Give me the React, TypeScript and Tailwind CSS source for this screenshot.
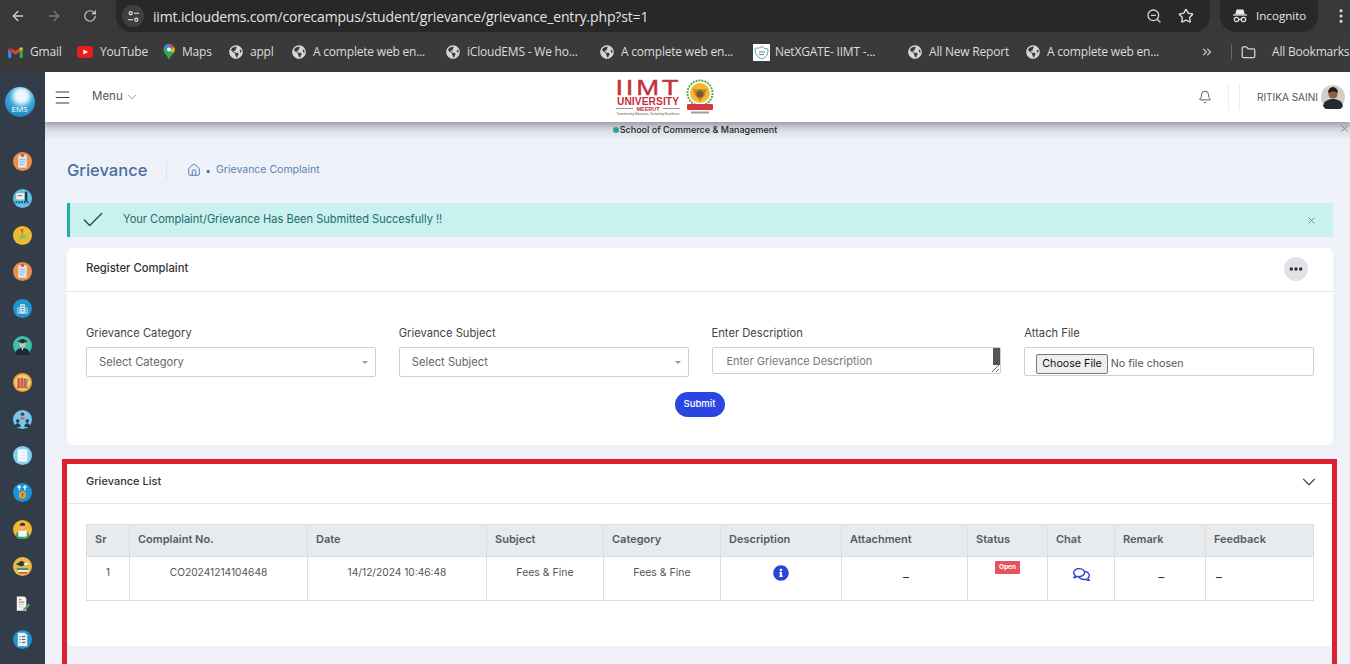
import type { ReactNode } from 'react'
import { ArrowLeft, ArrowRight, Bell, Check, ChevronDown, ChevronsRight, Ellipsis, EllipsisVertical, Folder, Home, Menu, RotateCw, Star, X, ZoomOut } from 'lucide-react'
import { FaGlobeAmericas, FaInfoCircle, FaRegComments } from 'react-icons/fa'

const poppins = 'font-["Inter","Open_Sans",sans-serif]'

function Gmail() {
  return (
    <svg viewBox="0 0 16 12" className="h-[11px] w-[15px]">
      <path d="M0 2v9a1 1 0 0 0 1 1h2.5V5z" fill="#4285f4" />
      <path d="M16 2v9a1 1 0 0 1-1 1h-2.5V5z" fill="#34a853" />
      <path d="M3.5 5 8 8.4 12.5 5V1L8 4.4 3.5 1z" fill="#ea4335" />
      <path d="M0 2c0-1.6 2-2.4 3.5-1v4L0 2.5z" fill="#c5221f" />
      <path d="M16 2c0-1.6-2-2.4-3.5-1v4L16 2.5z" fill="#fbbc04" />
    </svg>
  )
}

function YouTube() {
  return (
    <svg viewBox="0 0 16 12" className="h-[12px] w-[16px]">
      <rect width="16" height="12" rx="3" fill="#ea1d1d" />
      <path d="M6.3 3.4 11 6l-4.7 2.6z" fill="#fff" />
    </svg>
  )
}

function MapsPin() {
  return (
    <svg viewBox="0 0 12 16" className="h-[16px] w-[12px]">
      <path d="M6 0a5.6 5.6 0 0 1 5.6 5.6C11.6 9.6 7.6 11 6 16 4.4 11 .4 9.6.4 5.6A5.6 5.6 0 0 1 6 0z" fill="#34a853" />
      <path d="M1.6 2.2A5.6 5.6 0 0 1 6 0l1.5 3.8-3.4 3.4z" fill="#4285f4" />
      <path d="M6 0a5.6 5.6 0 0 1 5 3L7.5 3.8z" fill="#ea4335" />
      <path d="M11 3a5.6 5.6 0 0 1 .6 2.6c0 1.3-.4 2.3-1 3.3L7.5 7z" fill="#fbbc04" />
      <circle cx="6" cy="5.6" r="2" fill="#fff" />
    </svg>
  )
}

function NetIcon() {
  return (
    <svg viewBox="0 0 17 17" className="size-[17px]">
      <rect width="17" height="17" fill="#fff" />
      <path d="M2 5c2-2 3 0 4-1s4-2 5 0 3 0 4 1c0 5-1 8-6 10C4 13 2 10 2 5z" fill="none" stroke="#4ba3a8" strokeWidth="1" />
      <path d="M6 8h6M6 10.5h5" stroke="#6d7f86" strokeWidth="1" />
    </svg>
  )
}

function Bookmark({ icon, label, className }: { icon?: ReactNode; label: string; className?: string }) {
  return (
    <div className={`flex items-center gap-[7px] ${className ?? ''}`}>
      {icon ?? <FaGlobeAmericas className="size-[14px] text-[#d6d6d6]" />}
      <span className="whitespace-nowrap">{label}</span>
    </div>
  )
}

function Incognito() {
  return (
    <svg viewBox="0 0 16 16" className="size-[16px]" fill="none" stroke="#e8e8e8" strokeWidth="1.2">
      <path d="M5 2h6l1 4H4z" fill="#e8e8e8" />
      <path d="M1 7h14" />
      <circle cx="4.5" cy="11.5" r="2.2" />
      <circle cx="11.5" cy="11.5" r="2.2" />
      <path d="M6.7 11.5h2.6" />
    </svg>
  )
}

function BrowserBar() {
  return (
    <div className="shrink-0 bg-[#3a3a3a] font-['Open_Sans',sans-serif] text-[#e6e6e6]">
      <div className="flex h-[32px] items-center bg-[#383838]">
        <div className="flex w-[116px] items-center pl-[10px]">
          <ArrowLeft className="size-[16px] text-[#cfcfcf]" />
          <ArrowRight className="ml-[20px] size-[16px] text-[#777]" />
          <RotateCw className="ml-[21px] size-[14px] text-[#d0d0d0]" />
        </div>
        <div className="flex h-[32px] flex-1 items-center rounded-b-[16px] bg-[#282828] pl-[6px] pr-[16px]">
          <span className="flex size-[22px] items-center justify-center rounded-full bg-[#3f3f3f]">
            <svg viewBox="0 0 14 14" className="size-[13px]" fill="none" stroke="#e8e8e8" strokeWidth="1.2">
              <circle cx="4" cy="3.5" r="1.7" />
              <path d="M7.5 3.5H13M1 10.5h5.5" />
              <circle cx="10" cy="10.5" r="1.7" />
            </svg>
          </span>
          <span className="ml-[9px] text-[14px] tracking-[-0.16px] text-[#e4e4e4]">
            iimt.icloudems.com/corecampus/student/grievance/grievance_entry.php?st=1
          </span>
          <ZoomOut className="ml-auto size-[16px] text-[#d6d6d6]" />
          <Star className="ml-[16px] size-[16px] text-[#e0e0e0]" />
        </div>
        <div className="ml-[10px] flex h-[32px] w-[98px] items-center gap-[8px] rounded-b-[16px] bg-[#282828] pl-[12px] text-[11.6px]">
          <Incognito />
          Incognito
        </div>
        <EllipsisVertical className="ml-[14px] size-[18px] shrink-0 text-[#e0e0e0]" />
      </div>
      <div className="flex h-[40px] items-center overflow-hidden pl-[8px] text-[12px] tracking-[-0.2px] text-[#dcdcdc]">
        <Bookmark icon={<Gmail />} label="Gmail" className="w-[69px] shrink-0" />
        <Bookmark icon={<YouTube />} label="YouTube" className="w-[86px] shrink-0" />
        <Bookmark icon={<MapsPin />} label="Maps" className="w-[66px] shrink-0" />
        <Bookmark label="appl" className="w-[63px] shrink-0" />
        <Bookmark label="A complete web en..." className="w-[154px] shrink-0" />
        <Bookmark label="iCloudEMS - We ho..." className="w-[154px] shrink-0" />
        <Bookmark label="A complete web en..." className="w-[153px] shrink-0" />
        <Bookmark icon={<NetIcon />} label="NetXGATE- IIMT -..." className="w-[155px] shrink-0 !gap-[5px]" />
        <Bookmark label="All New Report" className="w-[118px] shrink-0" />
        <Bookmark label="A complete web en..." className="w-[174px] shrink-0" />
        <ChevronsRight className="size-[14px] shrink-0 text-[#cfcfcf]" />
        <span className="ml-[17px] h-[16px] w-px shrink-0 bg-[#666]" />
        <Folder className="ml-[9px] size-[15px] shrink-0 text-[#d6d6d6]" />
        <span className="ml-[16px] whitespace-nowrap">All Bookmarks</span>
      </div>
    </div>
  )
}

const pageIcon = (
  <>
    <circle cx="10" cy="10" r="10" fill="#ee8f45" />
    <rect x="5.5" y="3.5" width="9" height="13" rx="1" fill="#d5e6f2" />
    <rect x="8.5" y="2" width="3" height="3" fill="#d9503f" />
    <path d="M7 8h6M7 10.5h6M7 13h4" stroke="#8fb6d4" strokeWidth="1" />
  </>
)

const sideIcons: ReactNode[] = [
  pageIcon,
  <>
    <circle cx="10" cy="10" r="10" fill="#63bfe6" />
    <rect x="3.5" y="4.5" width="8.5" height="6.5" fill="#f1f4f6" />
    <path d="M5 7h5" stroke="#d9503f" strokeWidth="1.2" />
    <rect x="12.5" y="5" width="2.6" height="8" fill="#24384e" />
    <circle cx="13.8" cy="4" r="1.4" fill="#24384e" />
    <path d="M2.5 14h15" stroke="#24506f" strokeWidth="2" strokeDasharray="2 1" />
  </>,
  <>
    <circle cx="10" cy="10" r="10" fill="#f2b92f" />
    <path d="M4.5 9.5 15.5 7.5 16 13 5.5 15z" fill="#b9c456" />
    <path d="M8 3.5h3l-1 3 .2 3h-.6l-.4-3z" fill="#d9483a" />
    <path d="M7 12 13 11" stroke="#7c8f3a" strokeWidth=".8" />
  </>,
  pageIcon,
  <>
    <circle cx="10" cy="10" r="10" fill="#1e96d0" />
    <rect x="7.5" y="5.5" width="5" height="10" fill="#d6ebf7" />
    <rect x="4.5" y="9" width="3" height="6.5" fill="#a9d3ec" />
    <rect x="12.5" y="9" width="3" height="6.5" fill="#a9d3ec" />
    <path d="M8.8 7.5h2.4M8.8 10h2.4M8.8 12.5h2.4M5.2 11h1.6M13.2 11h1.6M5.2 13.5h1.6M13.2 13.5h1.6" stroke="#2873a8" strokeWidth="1" />
  </>,
  <>
    <circle cx="10" cy="10" r="10" fill="#3fc0ac" />
    <path d="M2.5 20c0-5.5 3-7.5 7.5-7.5s7.5 2 7.5 7.5z" fill="#1a2a33" />
    <circle cx="10" cy="9" r="3.2" fill="#e5bd98" />
    <path d="M4.5 5.5 10 3l5.5 2.5L10 8z" fill="#21343d" />
    <path d="M9 12.5h2l-1 3z" fill="#e8f2f2" />
  </>,
  <>
    <circle cx="10" cy="10" r="10" fill="#f0a838" />
    <circle cx="10" cy="10" r="8" fill="#f6cf7c" />
    <path d="M4.5 5.5h3V15h-3zM8 5h2.5v10H8zM11 5.5h2.5V15H11z" fill="#cf5a50" />
    <path d="M14 6l2 .6-1.5 8.4-1-.3z" fill="#5aa56b" />
    <path d="M4 15.5h12" stroke="#9a5f2a" strokeWidth="1" />
  </>,
  <>
    <circle cx="10" cy="10" r="10" fill="#74c6ea" />
    <circle cx="10" cy="4.5" r="1.8" fill="#5b3a2a" />
    <path d="M7.5 10c0-2 1-3 2.5-3s2.5 1 2.5 3z" fill="#e0675c" />
    <circle cx="5" cy="11.5" r="1.8" fill="#24384e" />
    <circle cx="15" cy="11.5" r="1.8" fill="#24384e" />
    <path d="M2 18c0-2.5 1-4 3-4s3 1.5 3 4zM12 18c0-2.5 1-4 3-4s3 1.5 3 4z" fill="#24384e" />
  </>,
  <>
    <circle cx="10" cy="10" r="10" fill="#82d0f1" />
    <rect x="5" y="3.5" width="10" height="13" rx="1" fill="#f3f8fb" />
    <path d="M7 7h.1M7 10h.1M7 13h.1" stroke="#d9503f" strokeWidth="1.2" />
    <path d="M9 7h4M9 10h4M9 13h4" stroke="#d6e2ea" strokeWidth="1" />
  </>,
  <>
    <circle cx="10" cy="10" r="10" fill="#1c93dc" />
    <path d="M6.5 8V3M4.8 4.8 6.5 3l1.7 1.8M12.5 8V3M10.8 4.8 12.5 3l1.7 1.8" stroke="#fff" strokeWidth="1.2" fill="none" />
    <circle cx="10" cy="12.5" r="3.8" fill="#e1a52a" />
    <path d="M10 10.5v4" stroke="#7c5510" strokeWidth="1.2" />
  </>,
  <>
    <circle cx="10" cy="10" r="10" fill="#f2b632" />
    <path d="M3 18c0-5 2.5-7 7-7s7 2 7 7a10 10 0 0 1-14 0z" fill="#3f9e5c" />
    <circle cx="10" cy="6.5" r="2.8" fill="#e7b78f" />
    <path d="M7.2 6c0-2 1.3-3 2.8-3s2.8 1 2.8 3z" fill="#4a2d1e" />
    <rect x="5.5" y="11" width="9" height="6.5" rx=".8" fill="#f6f6f6" />
  </>,
  <>
    <circle cx="10" cy="10" r="10" fill="#efb84a" />
    <path d="M3 7.5 9 4l6 3-6 3z" fill="#2d3b44" />
    <path d="M4 11.5h12v2.2H4z" fill="#3e9e6a" />
    <path d="M5 13.7h11v2H5z" fill="#f2f2f2" />
    <path d="M6 15.7h9v1.8H6z" fill="#d9583e" />
    <path d="M11 6h5v2.5h-4z" fill="#f2f2f2" />
  </>,
  <>
    <path d="M4 2.5h8l2 2v13H4z" fill="#f4f4f4" />
    <path d="M6 6h3M6 8.5h6" stroke="#d9503f" strokeWidth="1" />
    <path d="M6 11h6M6 13.5h5" stroke="#c6c6c6" strokeWidth="1" />
    <path d="M11 15.5 16.5 10l1.5 1.5-5.5 5.5-2 .4z" fill="#5aa56b" />
  </>,
  <>
    <circle cx="10" cy="10" r="10" fill="#1f92cf" />
    <path d="M5 3h7.5L15 5.5V17H5z" fill="#e6f1f8" />
    <path d="M7 7h1M9.5 7H13M7 10h1M9.5 10H13M7 13h1M9.5 13H13" stroke="#33566f" strokeWidth="1" />
  </>,
]

function Sidebar() {
  return (
    <aside className="flex w-[45px] shrink-0 flex-col items-center bg-[#333d4a]">
      <div className="mr-[6px] mt-[15px] flex size-[30px] items-end justify-center rounded-full bg-[radial-gradient(circle_at_55%_30%,#f2fafd_0%,#e6f4fb_22%,#3ea8dc_45%,#0f6fa8_100%)] pb-[3px] font-['Open_Sans',sans-serif] text-[8px] leading-[10px] text-white">
        EMS
      </div>
      <div className="mt-[35px] flex flex-col items-center gap-[17.8px]">
        {sideIcons.map((icon, i) => (
          <svg key={i} viewBox="0 0 20 20" className="size-[19px] shrink-0">
            {icon}
          </svg>
        ))}
      </div>
    </aside>
  )
}

function Logo() {
  return (
    <div className="flex items-center gap-[3px]">
      <div className="flex w-[64px] flex-col items-center font-['Liberation_Sans',sans-serif] text-[#c6303a]">
        <span className="inline-block scale-x-[1.25] text-[22px] leading-[18px] tracking-[2.2px] [-webkit-text-stroke:0.4px_#c6303a]">IIMT</span>
        <span className="text-[10.2px] font-bold leading-[9px] tracking-[0.1px]">UNIVERSITY</span>
        <div className="flex w-full items-center gap-[3px]">
          <span className="h-px flex-1 bg-[#999]" />
          <span className="text-[5.5px] font-bold leading-[6px]">MEERUT</span>
          <span className="h-px flex-1 bg-[#999]" />
        </div>
        <span className="whitespace-nowrap text-[3px] leading-[4px] text-[#555]">Transforming Education, Sustaining Excellence</span>
      </div>
      <svg viewBox="0 0 34 36" className="h-[36px] w-[34px]">
        <circle cx="17" cy="14" r="12.5" fill="none" stroke="#5aa84e" strokeWidth="2" strokeDasharray="2 1" />
        <circle cx="17" cy="14" r="10" fill="#f4b92c" />
        <path d="M10 9c2 2 4 1 7 1s5 1 7-1l-2 7-5 6-5-6z" fill="#b98a3c" />
        <circle cx="17" cy="15" r="3.5" fill="#7a5a2a" />
        <rect x="4" y="25" width="26" height="6" rx="1" fill="#d6363f" />
        <rect x="8" y="32.5" width="18" height="2" fill="#999" />
      </svg>
    </div>
  )
}

function Topbar() {
  return (
    <header className="z-10 flex h-[50px] shrink-0 items-center bg-white pl-[8px] shadow-[0_3px_6px_rgba(60,60,70,0.35)]">
      <Menu className="size-[19px] text-[#3f3f3f]" strokeWidth={1.3} />
      <div className={`ml-[20px] flex w-[47px] items-center gap-[2px] text-[11.5px] text-[#555] ${poppins}`}>
        Menu <ChevronDown className="size-[16px] text-[#777]" strokeWidth={1.3} />
      </div>
      <div className="ml-[477px]">
        <Logo />
      </div>
      <Bell className="ml-[481px] size-[14px] text-[#444]" strokeWidth={1.5} />
      <span className="ml-[16px] h-[26px] w-px bg-[#ececec]" />
      <span className="ml-[10px] h-[26px] w-px bg-[#ececec]" />
      <span className={`ml-[17px] whitespace-nowrap text-[10px] text-[#555] ${poppins}`}>RITIKA SAINI</span>
      <svg viewBox="0 0 24 24" className="ml-[3px] size-[24px]">
        <circle cx="12" cy="12" r="12" fill="#d4cfc6" />
        <path d="M2 21c1-5 5-7 10-7s9 2 10 7a12 12 0 0 1-20 0z" fill="#222c36" />
        <circle cx="12" cy="9" r="4.6" fill="#8a6248" />
        <path d="M7 8c0-4 3-6 5-6s5 2 5 6c-2-2-7-2-10 0z" fill="#1c1c1c" />
      </svg>
    </header>
  )
}

function Field({ label, children }: { label: string; children: ReactNode }) {
  return (
    <div className="min-w-0 flex-1">
      <label className="mb-[7px] block text-[11.2px] leading-[13px] text-[#444]">{label}</label>
      {children}
    </div>
  )
}

function FakeSelect({ label }: { label: string }) {
  return (
    <div className="flex h-[30px] items-center justify-between rounded-[2px] border border-[#cfcfcf] pl-[12px] pr-[7px] text-[11.2px] text-[#666]">
      {label}
      <span className="mt-[1px] border-x-[3px] border-t-[3px] border-x-transparent border-t-[#999]" />
    </div>
  )
}

const headers = ['Sr', 'Complaint No.', 'Date', 'Subject', 'Category', 'Description', 'Attachment', 'Status', 'Chat', 'Remark', 'Feedback']
const widths = [43, 178, 179, 117, 117, 121, 126, 80, 67, 91, 108]

function GrievanceTable() {
  return (
    <table className="w-[1227px] table-fixed border-collapse text-[10.5px] text-[#555]">
      <colgroup>
        {widths.map((w, i) => (
          <col key={i} style={{ width: w }} />
        ))}
      </colgroup>
      <thead>
        <tr className="h-[32px] bg-[#e8ebee]">
          {headers.map((h) => (
            <th key={h} className="border border-[#dcdfe2] pb-[3px] pl-[8px] text-left text-[11px] font-semibold text-[#555b63]">
              {h}
            </th>
          ))}
        </tr>
      </thead>
      <tbody>
        <tr className="h-[44px] text-center align-top">
          <Td>1</Td>
          <Td small>CO20241214104648</Td>
          <Td small>14/12/2024 10:46:48</Td>
          <Td>Fees &amp; Fine</Td>
          <Td>Fees &amp; Fine</Td>
          <td className="border border-[#dcdfe2]">
            <FaInfoCircle className="mx-auto mt-[8px] size-[16px] text-[#2b46d6]" />
          </td>
          <Dash />
          <td className="border border-[#dcdfe2]">
            <span className="mx-auto mt-[4px] flex h-[13px] w-[25px] items-center justify-center rounded-[1px] bg-[#e8525a] text-[6.5px] font-bold text-white">
              Open
            </span>
          </td>
          <td className="border border-[#dcdfe2]">
            <FaRegComments className="mx-auto mt-[9px] size-[17px] text-[#2b46d6]" />
          </td>
          <Dash />
          <Dash left />
        </tr>
      </tbody>
    </table>
  )
}

function Td({ children, small }: { children: ReactNode; small?: boolean }) {
  return <td className={`border border-[#dcdfe2] pt-[9px] leading-[13px] ${small ? 'text-[10.2px]' : 'text-[10.5px]'}`}>{children}</td>
}

function Dash({ left }: { left?: boolean }) {
  return (
    <td className={`border border-[#dcdfe2] pt-[6px] text-[13px] text-[#333] ${left ? 'pl-[10px] text-left' : 'pl-[3px] text-center'}`}>
      _
    </td>
  )
}

export default function App() {
  return (
    <div className="relative flex h-[664px] w-[1350px] flex-col overflow-hidden">
      <BrowserBar />
      <div className="flex min-h-0 flex-1">
        <Sidebar />
        <div className={`flex min-w-0 flex-1 flex-col bg-[#eff1f9] ${poppins}`}>
          <Topbar />
          <div className="relative flex h-[17px] shrink-0 items-center justify-center bg-[linear-gradient(#c9ccd2,#eceef5)] pb-[2px] pr-[5px] text-[9px] font-medium text-[#222]">
            <span className="mr-[1px] size-[6px] rounded-full bg-[#2aa79b]" />
            School of Commerce &amp; Management
            <X className="absolute right-0 top-[1px] size-[11px] text-[#777]" />
          </div>
          <main className="flex flex-col pl-[22px] pr-[17px]">
            <div className="flex h-[64px] shrink-0 items-center pb-[2px]">
              <h1 className="text-[16.5px] font-medium text-[#47709d]">Grievance</h1>
              <span className="ml-[19px] h-[19px] w-px bg-[#e0e2ea]" />
              <Home className="ml-[20px] size-[14px] text-[#47709d]" strokeWidth={1.5} />
              <span className="ml-[4px] text-[10px] text-[#47709d]">•</span>
              <span className="ml-[5px] text-[10.5px] text-[#5c82ad]">Grievance Complaint</span>
            </div>
            <div className="flex h-[34px] shrink-0 items-center border-l-[3px] border-[#1fb0a5] bg-[#c9f1ef] pr-[16px] text-[#1e6b6b]">
              <Check className="ml-[10px] size-[26px] text-[#24505a]" strokeWidth={1.3} />
              <span className="ml-[17px] pb-[1px] text-[11.06px]">Your Complaint/Grievance Has Been Submitted Succesfully !!</span>
              <X className="ml-auto size-[11px] text-[#5f8f90]" />
            </div>
            <section className="mt-[11px] h-[197px] shrink-0 rounded-[6px] bg-white">
              <div className="flex h-[44px] items-center justify-between border-b border-[#e4e6ea] pb-[2px] pl-[19px] pr-[25px] text-[11.3px] font-medium text-[#333]">
                Register Complaint
                <span className="flex size-[24px] items-center justify-center rounded-full bg-[#dfe2e6]">
                  <Ellipsis className="size-[16px] text-[#222]" strokeWidth={3} />
                </span>
              </div>
              <div className="flex gap-[23px] px-[19px] pt-[35px]">
                <Field label="Grievance Category">
                  <FakeSelect label="Select Category" />
                </Field>
                <Field label="Grievance Subject">
                  <FakeSelect label="Select Subject" />
                </Field>
                <Field label="Enter Description">
                  <div className="relative">
                    <textarea
                      rows={1}
                      placeholder="Enter Grievance Description"
                      className="block h-[27px] w-full rounded-[2px] border border-[#cfcfcf] py-[6px] pl-[14px] text-[11px] leading-[15px] placeholder:text-[#777]"
                    />
                    <span className="absolute right-px top-px h-[17px] w-[7px] bg-[#555]" />
                  </div>
                </Field>
                <Field label="Attach File">
                  <input
                    type="file"
                    className="block h-[29px] w-full rounded-[2px] border border-[#cfcfcf] pl-[11px] pt-[6px] text-[10.7px] text-[#555] file:mr-[3px] file:h-[20px] file:rounded-[2px] file:border file:border-[#767676] file:bg-[#efefef] file:px-[5px] file:text-[10.7px] file:text-[#111]"
                  />
                </Field>
              </div>
              <div className="mt-[15px] flex justify-center pr-[1px]">
                <button className="h-[25px] w-[50px] rounded-full bg-[#2b46e0] text-[9.5px] font-medium text-white">Submit</button>
              </div>
            </section>
            <section className="mt-[15px] h-[186px] shrink-0 rounded-[6px] bg-white">
              <div className="flex h-[44px] items-center justify-between border-b border-[#e4e6ea] pl-[19px] pr-[13px] text-[11px] font-medium text-[#333]">
                Grievance List
                <ChevronDown className="size-[22px] text-[#444]" strokeWidth={1.2} />
              </div>
              <div className="px-[19px] pt-[20px]">
                <GrievanceTable />
              </div>
            </section>
          </main>
        </div>
      </div>
      {/* red marker the screenshot's author drew round the list card */}
      <div className="pointer-events-none absolute left-[62px] top-[459px] h-[220px] w-[1275px] border-[5px] border-[#dc2030]" />
    </div>
  )
}
